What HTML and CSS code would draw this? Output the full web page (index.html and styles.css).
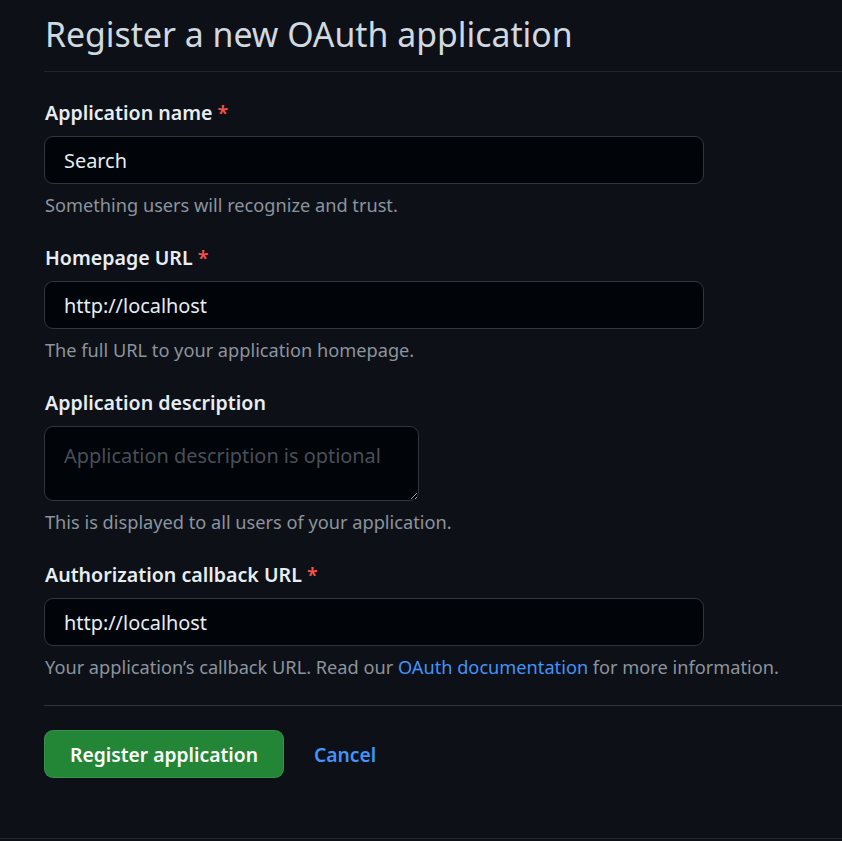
FILE: index.html
```html
<!DOCTYPE html>
<html lang="en">
<head>
<meta charset="utf-8">
<title>Register a new OAuth application</title>
<link rel="stylesheet" href="styles.css">
</head>
<body>
<div class="page">
  <main class="content">
    <div class="subhead">
      <h2 class="subhead-heading">Register a new OAuth application</h2>
    </div>
    <form class="form">
      <div class="form-group">
        <label class="form-label" for="name">Application name <span class="req">*</span></label>
        <input class="form-control" id="name" type="text" value="Search">
        <p class="note">Something users will recognize and trust.</p>
      </div>
      <div class="form-group">
        <label class="form-label" for="url">Homepage URL <span class="req">*</span></label>
        <input class="form-control" id="url" type="text" value="http://localhost">
        <p class="note">The full URL to your application homepage.</p>
      </div>
      <div class="form-group">
        <label class="form-label" for="desc">Application description</label>
        <textarea class="form-control textarea" id="desc" placeholder="Application description is optional"></textarea>
        <p class="note">This is displayed to all users of your application.</p>
      </div>
      <div class="form-group">
        <label class="form-label" for="cb">Authorization callback URL <span class="req">*</span></label>
        <input class="form-control" id="cb" type="text" value="http://localhost">
        <p class="note">Your application’s callback URL. Read our <a class="link" href="#">OAuth documentation</a> for more information.</p>
      </div>
      <div class="form-actions">
        <button class="btn-primary" type="button">Register application</button>
        <a class="btn-link" href="#">Cancel</a>
      </div>
    </form>
  </main>
  <footer class="footer"></footer>
</div>
</body>
</html>
```
FILE: styles.css
```css
html, body {
  margin: 0;
  padding: 0;
  background: #0d1117;
}
body {
  font-family: "Noto Sans", "Open Sans", sans-serif;
  color: #e6edf3;
  overflow: hidden;
}
.page {
  width: 842px;
  min-height: 841px;
}
.content {
  padding-left: 44px;
  padding-bottom: 60px;
}
.subhead {
  padding: 7px 0 10px;
  border-bottom: 1px solid #21262d;
}
.subhead-heading {
  margin: 0;
  padding-left: 1px;
  font-size: 33.8px;
  line-height: 54px;
  font-weight: 400;
  color: #d1d9e0;
}
.form {
  display: flex;
  flex-direction: column;
}
.form-group {
  display: flex;
  flex-direction: column;
  align-items: flex-start;
  margin-top: 24px;
}
.form-group:first-child {
  margin-top: 26px;
}
.form-label {
  padding-left: 1px;
  font-size: 19.6px;
  line-height: 30px;
  font-weight: 600;
  color: #e6edf3;
  margin-bottom: 8px;
}
.req {
  color: #f85149;
}
.form-control {
  box-sizing: border-box;
  width: 660px;
  height: 48px;
  padding: 0 19px;
  background: #010409;
  border: 1px solid #30363d;
  border-radius: 9px;
  font-family: inherit;
  font-size: 19.9px;
  color: #e6edf3;
  outline: none;
}
.textarea {
  width: 375px;
  height: 75px;
  padding: 14px 19px;
  line-height: 30px;
  resize: vertical;
}
.textarea::placeholder {
  color: #484f58;
}
.note {
  margin: 8px 0 0;
  padding-left: 1px;
  font-size: 18.2px;
  line-height: 27px;
  color: #8b949e;
}
.link {
  color: #4493f8;
  text-decoration: none;
}
.form-actions {
  margin-top: 24px;
  padding-top: 24px;
  border-top: 1px solid #30363d;
  display: flex;
  align-items: center;
  gap: 30px;
}
.btn-primary {
  box-sizing: border-box;
  height: 48px;
  padding: 0 25px;
  background: #238636;
  border: 1px solid rgba(240, 246, 252, 0.1);
  border-radius: 9px;
  font-family: inherit;
  font-size: 19.3px;
  font-weight: 600;
  color: #ffffff;
}
.btn-link {
  font-size: 19.3px;
  font-weight: 600;
  color: #4493f8;
  text-decoration: none;
}
.footer {
  border-top: 1px solid #21262d;
}
```
